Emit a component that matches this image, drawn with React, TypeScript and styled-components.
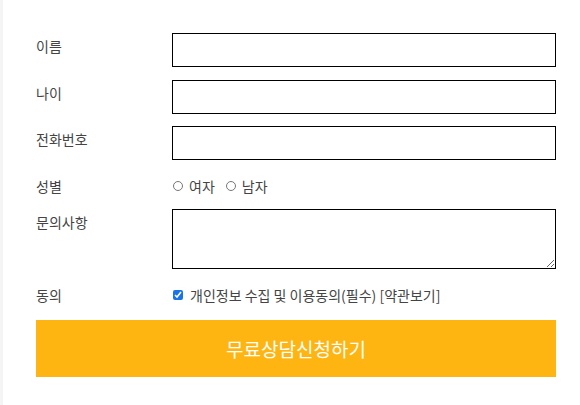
import styled, { createGlobalStyle } from "styled-components";

const Global = createGlobalStyle`
  html, body {
    margin: 0;
    padding: 0;
    background: #fff;
  }
  body {
    font-family: "Noto Sans CJK KR", "Noto Sans", sans-serif;
  }
`;

const Page = styled.div`
  border-left: 3px solid #f4f4f4;
  min-height: 405px;
  box-sizing: border-box;
  padding: 33px 24px 0 33px;
`;

const Form = styled.form`
  display: flex;
  flex-direction: column;
  width: 520px;
`;

const Row = styled.div<{ $h: number; $mb: number }>`
  display: flex;
  align-items: flex-start;
  height: ${(p) => p.$h}px;
  margin-bottom: ${(p) => p.$mb}px;
`;

const Label = styled.label`
  width: 136px;
  flex-shrink: 0;
  font-size: 14px;
  line-height: 18px;
  color: #444;
  padding-top: 4px;
`;

const Field = styled.div`
  flex: 1;
  display: flex;
  align-items: center;
  height: 100%;
`;

const TextInput = styled.input`
  width: 100%;
  height: 34px;
  box-sizing: border-box;
  border: 1px solid #000;
  outline: none;
  padding: 0 6px;
  font-size: 14px;
`;

const TextArea = styled.textarea`
  width: 100%;
  height: 60px;
  box-sizing: border-box;
  border: 1px solid #000;
  outline: none;
  font-size: 14px;
  resize: vertical;
`;

const Choice = styled.label`
  display: inline-flex;
  align-items: center;
  font-size: 14px;
  color: #444;
  margin-right: 10px;
  input {
    margin: 0 6px 0 1px;
    width: 10px;
    height: 10px;
  }
`;

const Check = styled.label`
  display: inline-flex;
  align-items: center;
  font-size: 14px;
  color: #444;
  input {
    margin: 0 7px 0 1px;
    width: 10px;
    height: 10px;
    accent-color: #1a73e8;
  }
`;

const Submit = styled.button`
  width: 520px;
  height: 57px;
  border: 0;
  background: #ffb511;
  color: #fff;
  font-family: "Noto Sans CJK KR", sans-serif;
  font-size: 19px;
  cursor: pointer;
`;

export default function App() {
  return (
    <>
      <Global />
      <Page>
        <Form onSubmit={(e) => e.preventDefault()}>
          <Row $h={34} $mb={13}>
            <Label>이름</Label>
            <Field>
              <TextInput type="text" />
            </Field>
          </Row>
          <Row $h={34} $mb={12}>
            <Label>나이</Label>
            <Field>
              <TextInput type="text" />
            </Field>
          </Row>
          <Row $h={34} $mb={13}>
            <Label>전화번호</Label>
            <Field>
              <TextInput type="text" />
            </Field>
          </Row>
          <Row $h={26} $mb={10}>
            <Label>성별</Label>
            <Field>
              <Choice>
                <input type="radio" name="sex" />
                여자
              </Choice>
              <Choice>
                <input type="radio" name="sex" />
                남자
              </Choice>
            </Field>
          </Row>
          <Row $h={60} $mb={13}>
            <Label>문의사항</Label>
            <Field>
              <TextArea />
            </Field>
          </Row>
          <Row $h={26} $mb={12}>
            <Label>동의</Label>
            <Field>
              <Check>
                <input type="checkbox" defaultChecked />
                개인정보 수집 및 이용동의(필수) [약관보기]
              </Check>
            </Field>
          </Row>
          <Submit type="submit">무료상담신청하기</Submit>
        </Form>
      </Page>
    </>
  );
}
